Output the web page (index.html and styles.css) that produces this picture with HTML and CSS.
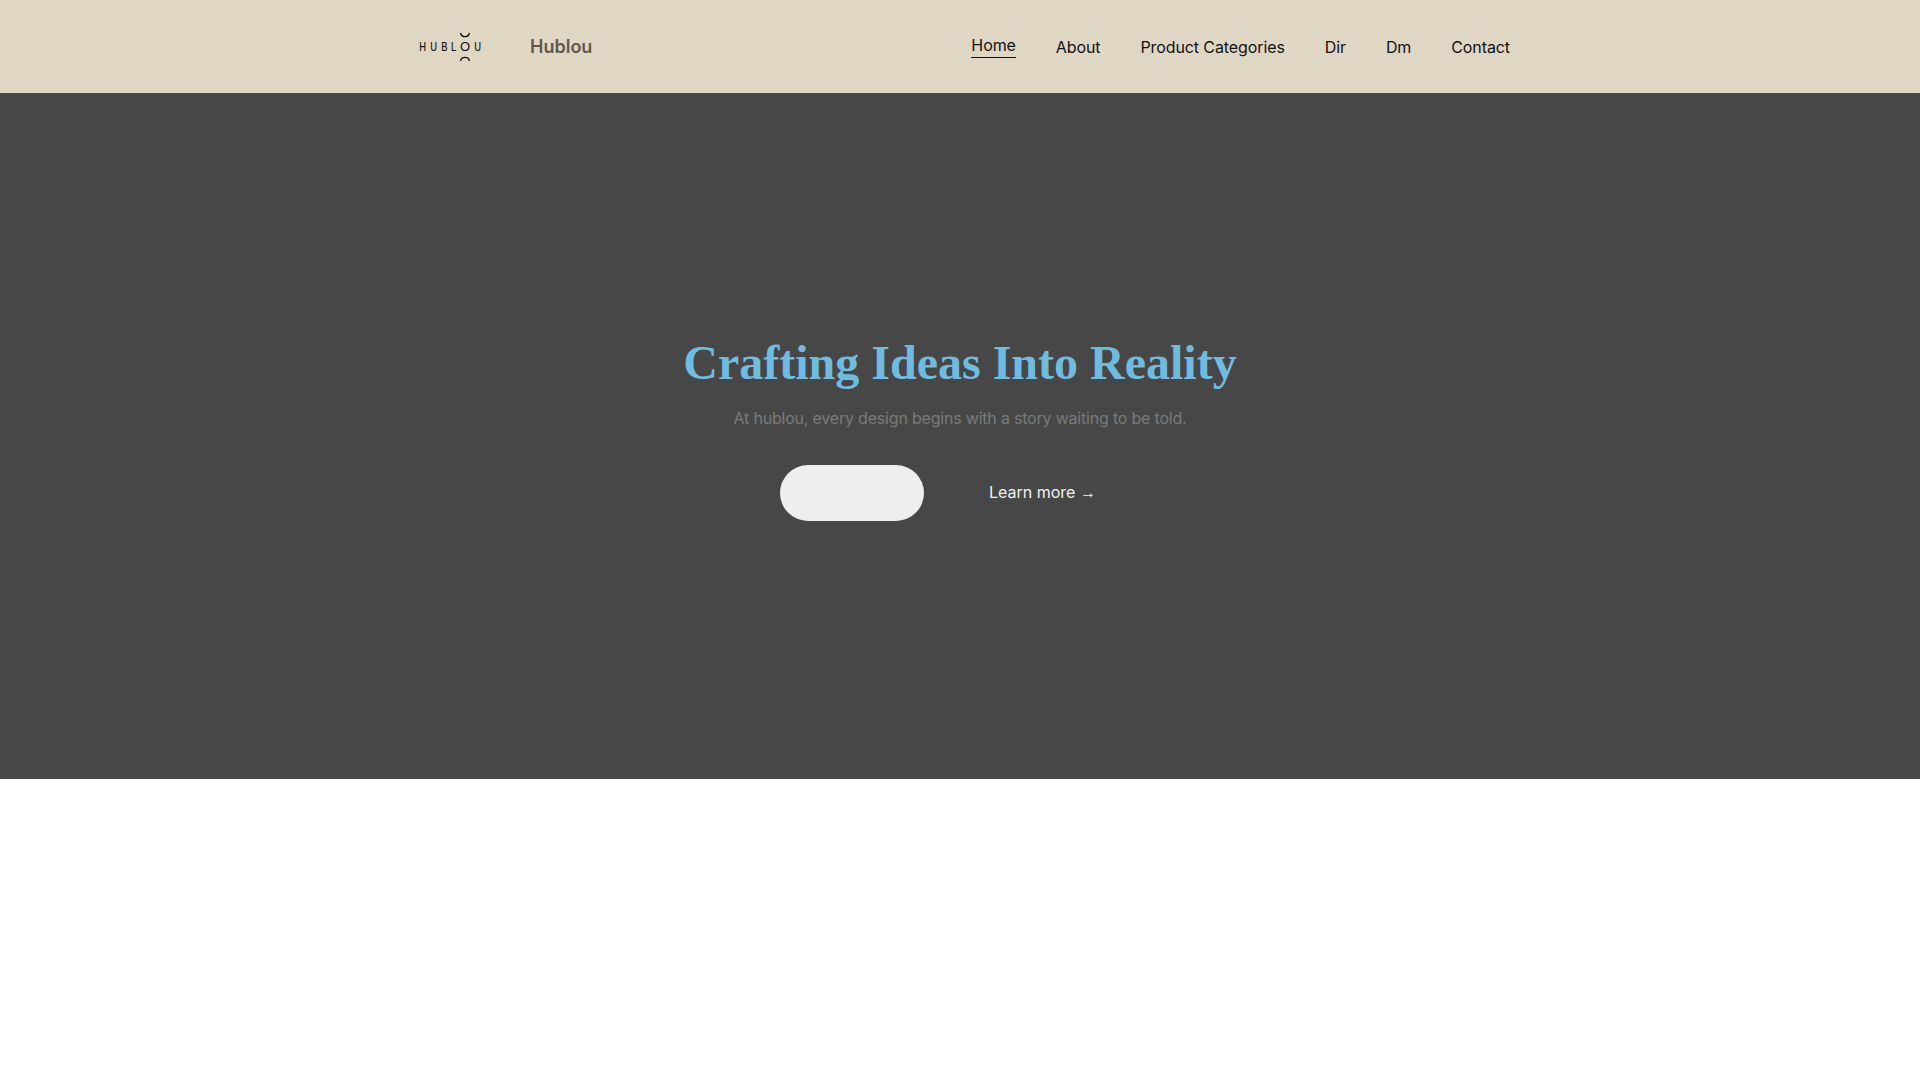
FILE: index.html
```html
<!DOCTYPE html>
<html lang="en">
<head>
    <meta charset="UTF-8">
    <meta name="viewport" content="width=device-width, initial-scale=1.0">
    <title>Hublou</title>
    <link rel="stylesheet" href="styles.css">
</head>
<body>
    <header class="header">
        <div class="header-inner">
            <a class="brand" href="#">
                <span class="logo">
                    <span class="letter">H</span><span class="letter">U</span><span class="letter">B</span><span class="letter">L</span>
                    <span class="logo-o">
                        <svg class="arc" width="12" height="6" viewBox="0 0 12 6"><path d="M1.5 1a4.6 4.6 0 0 0 9 0" fill="none" stroke="#111" stroke-width="1.3"/></svg>
                        <span class="ring">O</span>
                        <svg class="arc" width="12" height="6" viewBox="0 0 12 6"><path d="M1.5 5a4.6 4.6 0 0 1 9 0" fill="none" stroke="#111" stroke-width="1.3"/></svg>
                    </span>
                    <span class="letter">U</span>
                </span>
                <span class="brand-name">Hublou</span>
            </a>
            <nav class="nav">
                <a class="active" href="#">Home</a>
                <a href="#">About</a>
                <a href="#">Product Categories</a>
                <a href="#">Dir</a>
                <a href="#">Dm</a>
                <a href="#">Contact</a>
            </nav>
        </div>
    </header>
    <section class="hero">
        <h1>Crafting Ideas Into Reality</h1>
        <p>At hublou, every design begins with a story waiting to be told.</p>
        <div class="actions">
            <a class="btn" href="#"></a>
            <a class="more" href="#">Learn more <span class="arrow">→</span></a>
        </div>
    </section>
    <div class="blank"></div>
</body>
</html>
```

FILE: styles.css
```css
* {
    box-sizing: border-box;
}
body {
    margin: 0;
    font-family: Inter, "Noto Sans", sans-serif;
    font-size: 16px;
    background-color: #fff;
}
a {
    text-decoration: none;
    color: inherit;
}
.header {
    height: 93px;
    background: #e0d6c4;
}
.header-inner {
    max-width: 1092px;
    height: 100%;
    margin-left: 418px;
    display: flex;
    align-items: center;
    justify-content: space-between;
}
.brand {
    display: flex;
    align-items: center;
    gap: 48px;
}
.logo {
    width: 64px;
    display: flex;
    align-items: center;
    justify-content: space-between;
    font-family: "Liberation Sans", sans-serif;
    font-size: 13px;
    color: #111;
}
.letter {
    transform: scaleX(0.72);
    -webkit-text-stroke: 0.2px #111;
}
.logo-o {
    display: flex;
    flex-direction: column;
    align-items: center;
    line-height: 14px;
    gap: 2px;
}
.ring {
    font-size: 13px;
}
.arc {
    display: block;
}
.brand-name {
    font-size: 18px;
    font-weight: 600;
    color: #5f574e;
}
.nav {
    display: flex;
    align-items: center;
    gap: 40px;
    color: #111;
}
.nav a {
    padding: 2px 0;
    letter-spacing: -0.1px;
}
.nav a.active {
    border-bottom: 1px solid #111;
    margin-bottom: 2px;
}
.hero {
    height: 686px;
    background: #474747;
    display: flex;
    flex-direction: column;
    align-items: center;
    padding-top: 240px;
    text-align: center;
}
.hero h1 {
    margin: 0;
    font-family: "Liberation Serif", serif;
    font-size: 48px;
    line-height: 60px;
    font-weight: 700;
    color: #6fbce0;
}
.hero p {
    margin: 12px 0 0;
    line-height: 26px;
    letter-spacing: -0.2px;
    color: #7a7a7a;
}
.actions {
    margin-top: 34px;
    display: flex;
    align-items: center;
    gap: 40px;
}
.btn {
    width: 144px;
    height: 56px;
    border-radius: 28px;
    background: #eee;
}
.more {
    width: 176px;
    padding-left: 25px;
    padding-bottom: 2px;
    text-align: left;
    color: #f2f2f2;
}
.arrow {
    font-family: "Liberation Sans", sans-serif;
}
```
